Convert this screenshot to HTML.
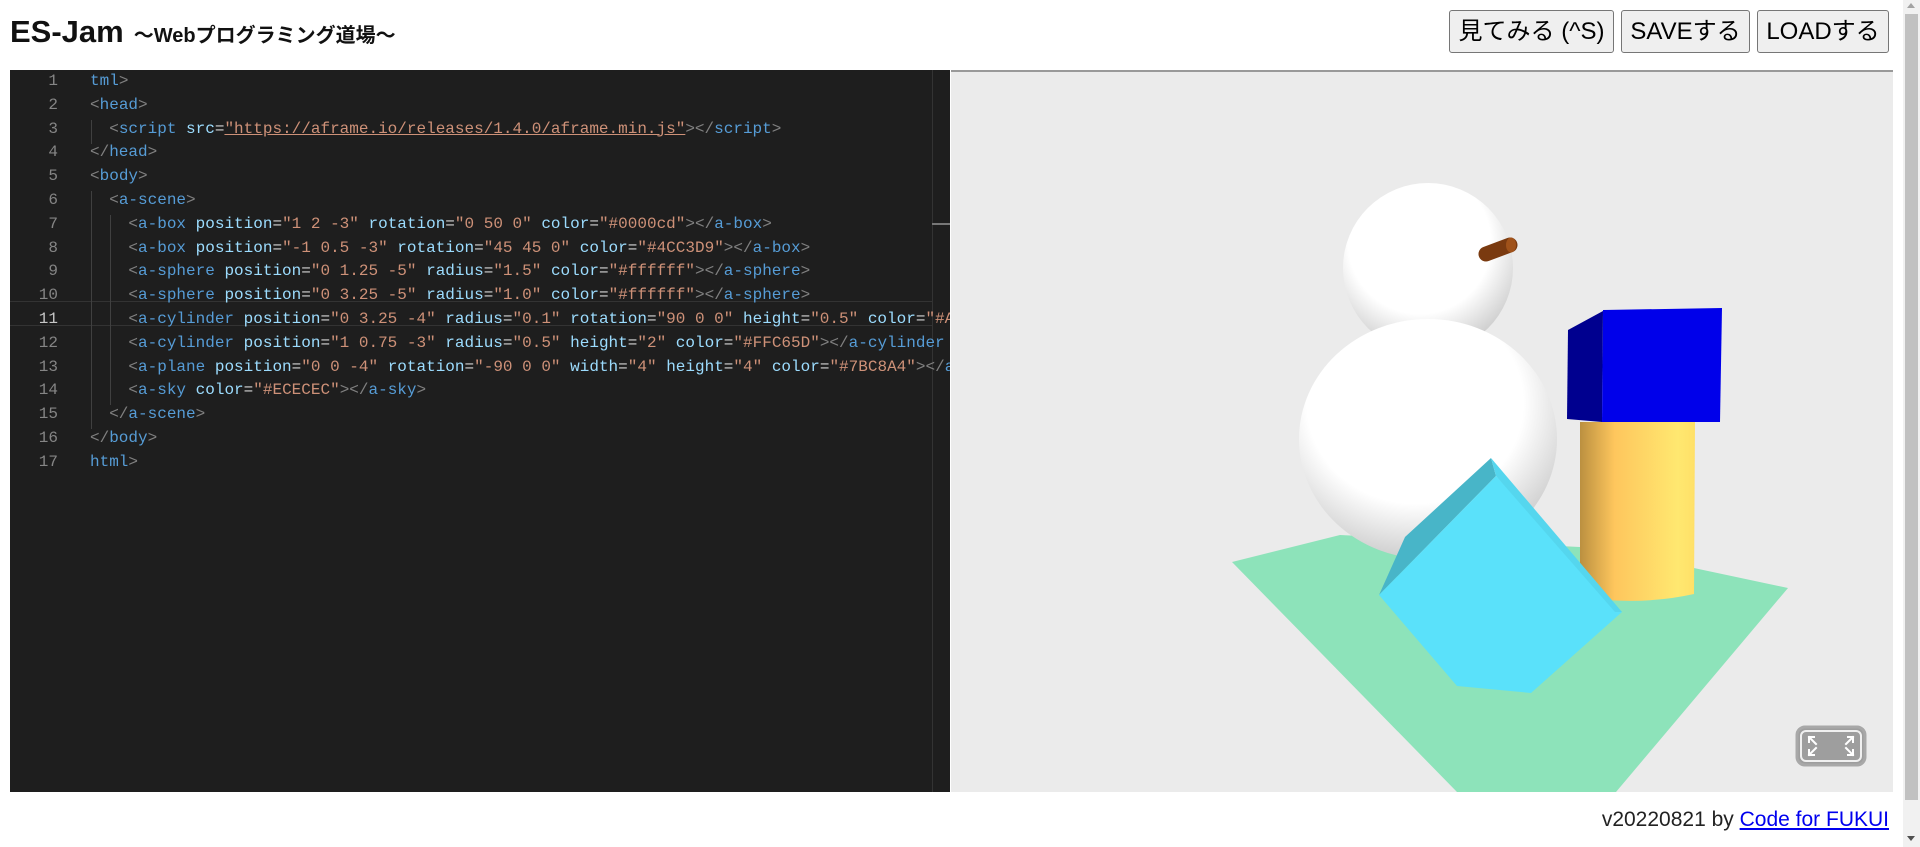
<!DOCTYPE html>
<html><head><meta charset="utf-8"><style>
*{margin:0;padding:0;box-sizing:border-box}
html,body{width:1920px;height:847px;overflow:hidden;background:#fff;font-family:"Liberation Sans","Noto Sans CJK JP",sans-serif}
h1{position:absolute;left:10px;top:14px;font-size:31px;font-weight:bold;color:#111;white-space:nowrap}
h1 small{font-size:20px;margin-left:10px}
.btn{position:absolute;top:10px;height:43px;border:1px solid #767676;border-radius:3px;background:#efefef;font-size:24px;line-height:41px;text-align:center;color:#000;white-space:nowrap}
#ed{position:absolute;left:10px;top:70px;width:940px;height:722px;background:#1e1e1e;overflow:hidden;font-family:"Liberation Mono",monospace;font-size:16px}
.ln{position:absolute;left:0;width:48px;text-align:right;color:#858585}
.cl{position:absolute;left:80px;white-space:pre;color:#d4d4d4}
.t{color:#569cd6}.a{color:#9cdcfe}.s{color:#ce9178}.g{color:#808080}
#pv{position:absolute;left:951px;top:70px;width:942px;height:722px;background:#ebebeb;overflow:hidden;border-top:2px solid #999}
#sb{position:absolute;left:1903px;top:0;width:17px;height:847px;background:#f1f1f1}
#foot{position:absolute;right:31px;top:808px;font-size:21px;color:#222}
#foot a{color:#00e;text-decoration:underline}
</style></head><body>
<h1>ES-Jam<small>～Webプログラミング道場～</small></h1>
<div class="btn" style="left:1449px;width:165px">見てみる (^S)</div>
<div class="btn" style="left:1621px;width:129px">SAVEする</div>
<div class="btn" style="left:1757px;width:132px">LOADする</div>
<div id="ed">
<div style="position:absolute;left:0;top:231px;width:922px;height:25px;border-top:1px solid #333;border-bottom:1px solid #333"></div>
<div style="position:absolute;left:922px;top:0;width:1px;height:722px;background:#333"></div>
<div style="position:absolute;left:922px;top:153px;width:18px;height:2px;background:#777"></div>
<div style="position:absolute;left:81px;top:50px;width:1px;height:24px;background:#404040"></div>
<div style="position:absolute;left:81px;top:121px;width:1px;height:238px;background:#404040"></div>
<div style="position:absolute;left:100px;top:145px;width:1px;height:190px;background:#404040"></div>
<div id="lines"></div>
</div>
<div id="pv">
<svg width="942" height="722" viewBox="951 70 942 722" style="position:absolute;left:0;top:-2px">
<defs>
<radialGradient id="sp" cx="0.45" cy="0.35" r="0.7"><stop offset="0.6" stop-color="#fff"/><stop offset="1" stop-color="#c4c4c4"/></radialGradient>
<linearGradient id="cy" x1="0" x2="1"><stop offset="0" stop-color="#bb9040"/><stop offset="0.3" stop-color="#fec65d"/><stop offset="0.85" stop-color="#ffe870"/><stop offset="1" stop-color="#ffe068"/></linearGradient>
</defs>
<polygon points="1232,562 1340,535 1600,548 1788,588 1616,792 1457,792" fill="#8de3ba"/>
<circle cx="1428" cy="268" r="85" fill="url(#sp)"/>
<ellipse cx="1428" cy="439" rx="129" ry="120" fill="url(#sp)"/>
<line x1="1486" y1="254" x2="1510" y2="245" stroke="#7a3a10" stroke-width="15" stroke-linecap="round"/>
<ellipse cx="1511" cy="245" rx="5" ry="7.5" fill="#a0521a"/>
<path d="M1580,422 L1695,422 L1694,594 Q1640,606 1580,597 Z" fill="url(#cy)"/>
<polygon points="1568,330 1603,311 1602,422 1567,419" fill="#00008f"/>
<polygon points="1603,310 1722,308 1720,422 1602,422" fill="#0000ea"/>
<polygon points="1491,458 1496,476 1379,595 1405,537" fill="#48b5c8"/>
<polygon points="1496,476 1622,612 1531,693 1457,686 1379,595" fill="#5ae1fa"/>
<polygon points="1491,458 1622,612 1615,612 1496,476" fill="#55d6ee"/>
<rect x="1797" y="727" width="68" height="38" rx="8" fill="#9e9e9e" stroke="#a8a8a8" stroke-width="3"/>
<rect x="1801" y="731" width="60" height="30" rx="5" fill="none" stroke="#f0f0f0" stroke-width="2"/>
<g stroke="#fff" stroke-width="2" fill="none" stroke-linecap="square">
<path d="M1809,737 L1816,744 M1809,737 h5 M1809,737 v5"/>
<path d="M1853,737 L1846,744 M1853,737 h-5 M1853,737 v5"/>
<path d="M1809,755 L1816,748 M1809,755 h5 M1809,755 v-5"/>
<path d="M1853,755 L1846,748 M1853,755 h-5 M1853,755 v-5"/>
</g>
</svg>
</div>
<div id="sb"><div style="position:absolute;left:2px;top:14px;width:13px;height:786px;background:#c1c1c1"></div>
<div style="position:absolute;left:4px;top:3px;border:4px solid transparent;border-bottom:5px solid #a3a3a3;border-top:0"></div>
<div style="position:absolute;left:4px;top:836px;border:4px solid transparent;border-top:5px solid #505050;border-bottom:0"></div></div>
<div id="foot">v20220821 by <a>Code for FUKUI</a></div>
<script>
var L=[
'<span class="t">tml</span><span class="g">&gt;</span>',
'<span class="g">&lt;</span><span class="t">head</span><span class="g">&gt;</span>',
'  <span class="g">&lt;</span><span class="t">script</span> <span class="a">src</span>=<span class="s" style="text-decoration:underline">"https://aframe.io/releases/1.4.0/aframe.min.js"</span><span class="g">&gt;&lt;/</span><span class="t">script</span><span class="g">&gt;</span>',
'<span class="g">&lt;/</span><span class="t">head</span><span class="g">&gt;</span>',
'<span class="g">&lt;</span><span class="t">body</span><span class="g">&gt;</span>',
'  <span class="g">&lt;</span><span class="t">a-scene</span><span class="g">&gt;</span>',
'    <span class="g">&lt;</span><span class="t">a-box</span> <span class="a">position</span>=<span class="s">"1 2 -3"</span> <span class="a">rotation</span>=<span class="s">"0 50 0"</span> <span class="a">color</span>=<span class="s">"#0000cd"</span><span class="g">&gt;&lt;/</span><span class="t">a-box</span><span class="g">&gt;</span>',
'    <span class="g">&lt;</span><span class="t">a-box</span> <span class="a">position</span>=<span class="s">"-1 0.5 -3"</span> <span class="a">rotation</span>=<span class="s">"45 45 0"</span> <span class="a">color</span>=<span class="s">"#4CC3D9"</span><span class="g">&gt;&lt;/</span><span class="t">a-box</span><span class="g">&gt;</span>',
'    <span class="g">&lt;</span><span class="t">a-sphere</span> <span class="a">position</span>=<span class="s">"0 1.25 -5"</span> <span class="a">radius</span>=<span class="s">"1.5"</span> <span class="a">color</span>=<span class="s">"#ffffff"</span><span class="g">&gt;&lt;/</span><span class="t">a-sphere</span><span class="g">&gt;</span>',
'    <span class="g">&lt;</span><span class="t">a-sphere</span> <span class="a">position</span>=<span class="s">"0 3.25 -5"</span> <span class="a">radius</span>=<span class="s">"1.0"</span> <span class="a">color</span>=<span class="s">"#ffffff"</span><span class="g">&gt;&lt;/</span><span class="t">a-sphere</span><span class="g">&gt;</span>',
'    <span class="g">&lt;</span><span class="t">a-cylinder</span> <span class="a">position</span>=<span class="s">"0 3.25 -4"</span> <span class="a">radius</span>=<span class="s">"0.1"</span> <span class="a">rotation</span>=<span class="s">"90 0 0"</span> <span class="a">height</span>=<span class="s">"0.5"</span> <span class="a">color</span>=<span class="s">"#A0522D"</span>',
'    <span class="g">&lt;</span><span class="t">a-cylinder</span> <span class="a">position</span>=<span class="s">"1 0.75 -3"</span> <span class="a">radius</span>=<span class="s">"0.5"</span> <span class="a">height</span>=<span class="s">"2"</span> <span class="a">color</span>=<span class="s">"#FFC65D"</span><span class="g">&gt;&lt;/</span><span class="t">a-cylinder</span>',
'    <span class="g">&lt;</span><span class="t">a-plane</span> <span class="a">position</span>=<span class="s">"0 0 -4"</span> <span class="a">rotation</span>=<span class="s">"-90 0 0"</span> <span class="a">width</span>=<span class="s">"4"</span> <span class="a">height</span>=<span class="s">"4"</span> <span class="a">color</span>=<span class="s">"#7BC8A4"</span><span class="g">&gt;&lt;/</span><span class="t">a-plane</span>',
'    <span class="g">&lt;</span><span class="t">a-sky</span> <span class="a">color</span>=<span class="s">"#ECECEC"</span><span class="g">&gt;&lt;/</span><span class="t">a-sky</span><span class="g">&gt;</span>',
'  <span class="g">&lt;/</span><span class="t">a-scene</span><span class="g">&gt;</span>',
'<span class="g">&lt;/</span><span class="t">body</span><span class="g">&gt;</span>',
'<span class="t">html</span><span class="g">&gt;</span>'];
var h='';
for(var i=0;i<L.length;i++){var y=2+i*23.8;
h+='<div class="ln" style="top:'+y+'px;'+(i==10?'color:#c6c6c6':'')+'">'+(i+1)+'</div><div class="cl" style="top:'+y+'px">'+L[i]+'</div>';}
document.getElementById('lines').innerHTML=h;
</script>
</body></html>
